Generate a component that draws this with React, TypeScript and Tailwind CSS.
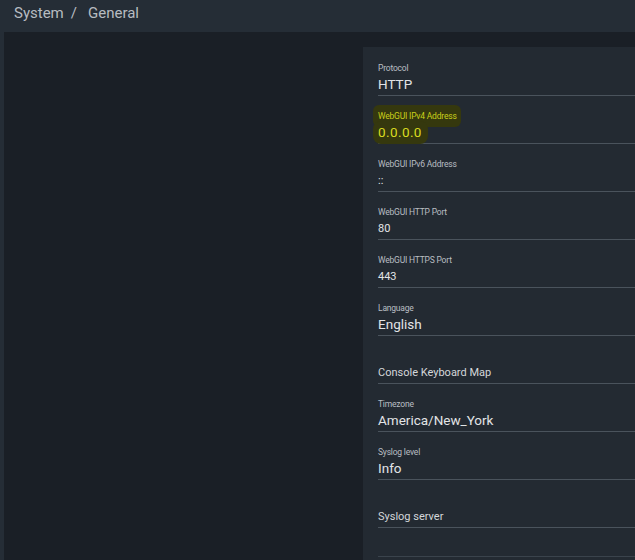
import React from 'react';

type Field = {
  label?: string;
  value?: string;
  big?: boolean;
  title?: string;
  highlight?: boolean;
};

const fields: Field[] = [
  { label: 'Protocol', value: 'HTTP', big: true },
  { label: 'WebGUI IPv4 Address', value: '0.0.0.0', big: true, highlight: true },
  { label: 'WebGUI IPv6 Address', value: '::' },
  { label: 'WebGUI HTTP Port', value: '80' },
  { label: 'WebGUI HTTPS Port', value: '443' },
  { label: 'Language', value: 'English', big: true },
  { title: 'Console Keyboard Map' },
  { label: 'Timezone', value: 'America/New_York', big: true },
  { label: 'Syslog level', value: 'Info', big: true },
  { title: 'Syslog server' },
];

function FieldRow({ f }: { f: Field }) {
  if (f.title) {
    return (
      <div className="h-[48px] flex items-end border-b border-[#4a535c] pb-[5px]">
        <span className="text-[11px] text-[#d4d7da] leading-none">{f.title}</span>
      </div>
    );
  }
  return (
    <div className="h-[48px] flex flex-col justify-end border-b border-[#4a535c]">
      <div className="leading-none">
        <span
          className={`text-[8.5px] leading-none tracking-[-0.2px] ${
            f.highlight
              ? 'text-[#c9cf1a] bg-[#35380e] rounded-md pl-[5px] ml-[-5px] pr-[4px] py-[6px]'
              : 'text-[#b9bec3]'
          }`}
        >
          {f.label}
        </span>
      </div>
      <div className="h-[21px] flex items-center">
        <span
          className={`${f.big ? 'text-[13.5px]' : 'text-[11px]'} leading-none ${
            f.highlight
              ? 'text-[#d8db20] bg-[#35380e] rounded-lg pl-[5px] ml-[-5px] pr-[6px] py-[5px] tracking-[0.4px]'
              : 'text-[#e2e4e6]'
          }`}
        >
          {f.value}
        </span>
      </div>
    </div>
  );
}

export default function App() {
  return (
    <div
      className="w-[635px] h-[560px] overflow-hidden bg-[#252d36] flex flex-col"
      style={{ fontFamily: 'Roboto, "Liberation Sans", sans-serif' }}
    >
      {/* header */}
      <div className="h-[32px] shrink-0 flex items-start pt-[4px] px-[14px] text-[15px] leading-[18px] text-[#b7bcc1]">
        <span>System</span>
        <span className="mx-[7px]">/</span>
        <span className="ml-[4px]">General</span>
      </div>

      {/* body */}
      <div className="flex-1 ml-[4px] bg-[#1a1f26] flex pt-[15px]">
        <div className="w-[359px] shrink-0" />
        <div className="flex-1 bg-[#232a32] pl-[15px] pt-[1px]">
          {fields.map((f, i) => (
            <FieldRow key={i} f={f} />
          ))}
          <div className="h-[29px] border-b border-[#3a434c]" />
        </div>
      </div>
    </div>
  );
}
